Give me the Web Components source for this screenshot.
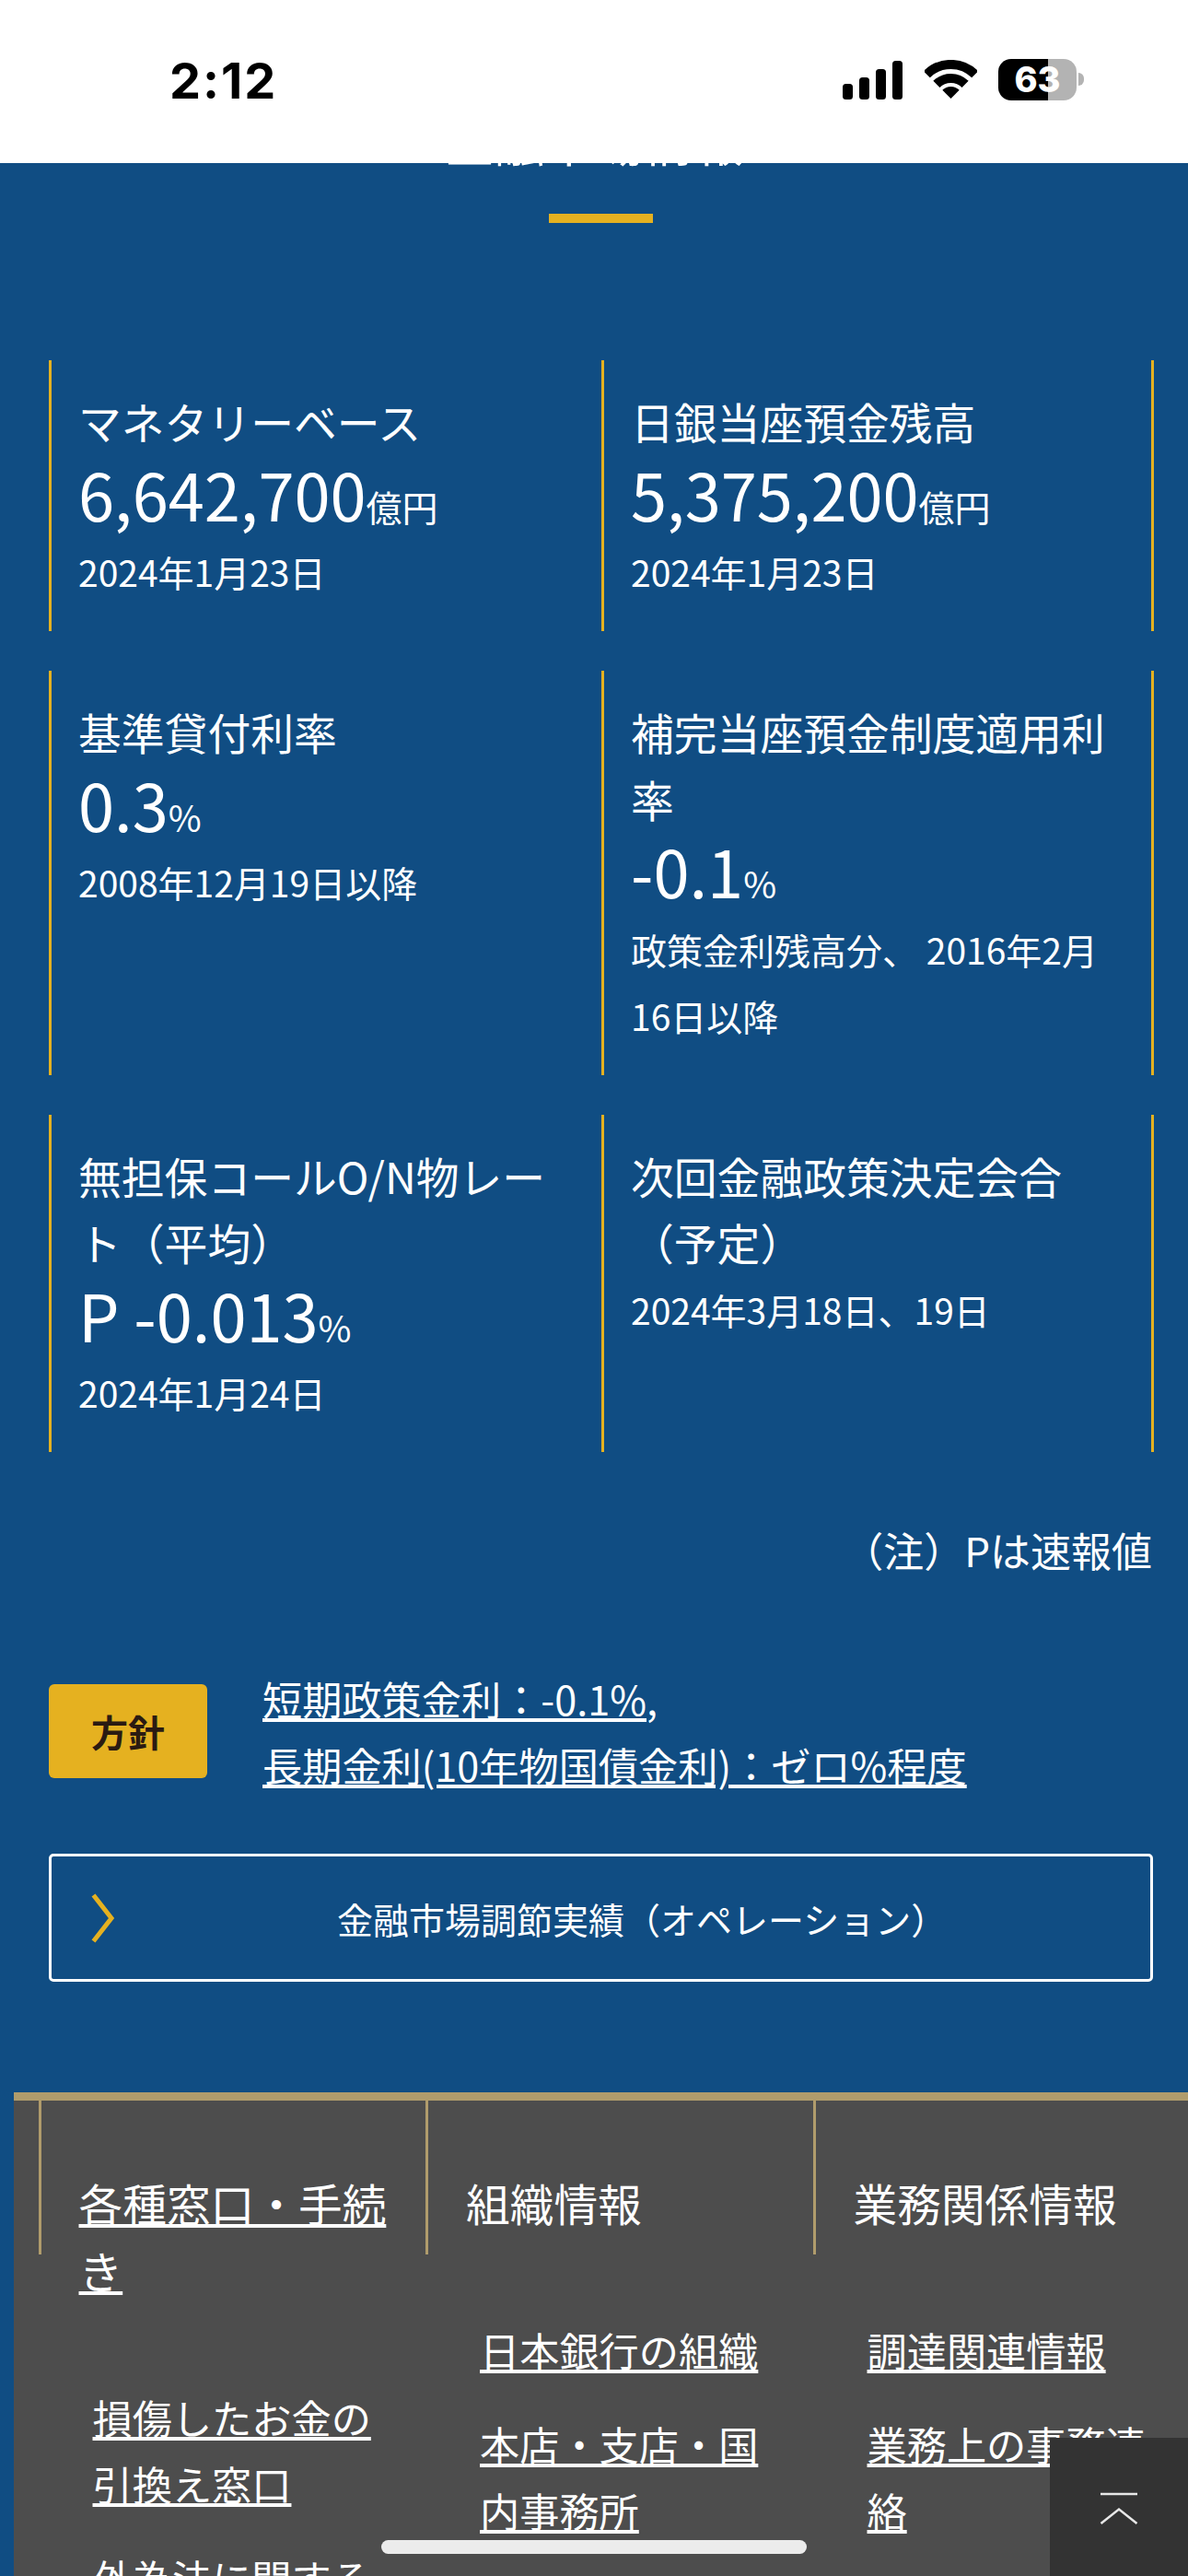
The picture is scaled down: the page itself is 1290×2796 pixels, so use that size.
<!DOCTYPE html>
<html lang="ja">
<head>
<meta charset="utf-8">
<title>金融市場情報</title>
<style>
  html, body { margin: 0; padding: 0; height: 2796px; overflow: hidden; background: #104d83; }
  body { position: relative; font-family: "Noto Sans CJK JP", "Noto Sans", sans-serif; color: #fff; }
  a { color: #fff; }
</style>
</head>
<body>
<boj-market>
  <boj-title>金融市場情報</boj-title>
  <boj-grid>
    <boj-metric>
      <span slot="label">マネタリーベース</span>
      <span slot="value">6,642,700</span><span slot="unit">億円</span>
      <span slot="note">2024年1月23日</span>
    </boj-metric>
    <boj-metric end>
      <span slot="label">日銀当座預金残高</span>
      <span slot="value">5,375,200</span><span slot="unit">億円</span>
      <span slot="note">2024年1月23日</span>
    </boj-metric>
    <boj-metric>
      <span slot="label">基準貸付利率</span>
      <span slot="value">0.3</span><span slot="unit">%</span>
      <span slot="note">2008年12月19日以降</span>
    </boj-metric>
    <boj-metric end>
      <span slot="label">補完当座預金制度適用利率</span>
      <span slot="value">-0.1</span><span slot="unit">%</span>
      <span slot="note">政策金利残高分、 2016年2月<br>16日以降</span>
    </boj-metric>
    <boj-metric>
      <span slot="label">無担保コールO/N物レート（平均）</span>
      <span slot="value">P -0.013</span><span slot="unit">%</span>
      <span slot="note">2024年1月24日</span>
    </boj-metric>
    <boj-metric end noval>
      <span slot="label">次回金融政策決定会合（予定）</span>
      <span slot="note">2024年3月18日、19日</span>
    </boj-metric>
  </boj-grid>
  <boj-note>（注）Pは速報値</boj-note>
  <boj-policy>
    <a href="#">短期政策金利：-0.1%</a>,<br>
    <a href="#">長期金利(10年物国債金利)：ゼロ%程度</a>
  </boj-policy>
  <boj-button>金融市場調節実績（オペレーション）</boj-button>
</boj-market>

<boj-footer>
  <boj-footer-col>
    <a slot="head" href="#">各種窓口・手続き</a>
    <a href="#">損傷したお金の引換え窓口</a>
    <a href="#">外為法に関する手続き</a>
  </boj-footer-col>
  <boj-footer-col>
    <span slot="head">組織情報</span>
    <a href="#">日本銀行の組織</a>
    <a href="#">本店・支店・国内事務所</a>
  </boj-footer-col>
  <boj-footer-col>
    <span slot="head">業務関係情報</span>
    <a href="#">調達関連情報</a>
    <a href="#">業務上の事務連絡</a>
  </boj-footer-col>
</boj-footer>

<boj-status time="2:12" level="63"></boj-status>
<boj-totop></boj-totop>
<boj-home></boj-home>

<script>
// small helper so every element just declares its css + markup
function define(name, html) {
  customElements.define(name, class extends HTMLElement {
    constructor() {
      super();
      this.attachShadow({ mode: 'open' }).innerHTML = typeof html === 'function' ? html(this) : html;
    }
  });
}

define('boj-market', `
  <style>
    :host { display: block; padding: 0 37px 0 53px; }
  </style>
  <slot></slot>
`);

define('boj-title', `
  <style>
    :host { display: block; height: 241px; text-align: center; font-size: 54px; line-height: 76px; }
    div { padding-top: 115px; padding-right: 16px; }
    i { display: block; width: 113px; height: 10px; background: #e5b120; margin: 41px auto 0; transform: translateX(-1px); }
  </style>
  <div><slot></slot></div>
  <i></i>
`);

define('boj-grid', `
  <style>
    :host { display: grid; grid-template-columns: 600px 600px; row-gap: 43px; margin-top: 150px; }
  </style>
  <slot></slot>
`);

define('boj-metric', `
  <style>
    :host { display: block; box-sizing: border-box; border-left: 3px solid #e5b120; padding: 30px 29px 29px; }
    :host([end]) { border-right: 3px solid #e5b120; }
    .label { font-size: 46.8px; line-height: 72.5px; }
    .num { height: 76px; line-height: 76px; padding: 3px 0 11.5px; font-size: 70.4px; white-space: nowrap; }
    :host([noval]) .num { display: none; }
    .unit { font-size: 39px; line-height: 1; }
    .note { font-size: 39px; line-height: 72px; }
  </style>
  <div class="label"><slot name="label"></slot></div>
  <div class="num"><slot name="value"></slot><span class="unit"><slot name="unit"></slot></span></div>
  <div class="note"><slot name="note"></slot></div>
`);

define('boj-note', `
  <style>
    :host { display: block; text-align: right; font-size: 44px; line-height: 73px; margin-top: 70px; padding-right: 2px; }
  </style>
  <slot></slot>
`);

define('boj-policy', `
  <style>
    :host { display: flex; align-items: flex-start; gap: 60px; margin-top: 88px; font-size: 43.2px; line-height: 72px; }
    b { flex: none; width: 172px; height: 102px; margin-top: 21px; background: #e5b120; border-radius: 6px;
        color: #2b1b12; font-size: 40px; line-height: 102px; text-align: center; font-weight: 700; }
  </style>
  <b>方針</b>
  <div><slot></slot></div>
`);

define('boj-button', `
  <style>
    :host { display: flex; align-items: center; box-sizing: border-box; height: 139px; width: 1199px; margin-top: 61px;
      border: 3px solid #fff; border-radius: 5px; font-size: 39px; color: #fff; }
    svg { flex: none; margin-left: 43px; }
    span { flex: 1; padding-left: 239px; }
  </style>
  <svg width="28" height="54" viewBox="0 0 28 54"><path d="M2.5 2 L22 27 L2.5 52" fill="none" stroke="#e5b120" stroke-width="5"/></svg>
  <span><slot></slot></span>
`);

define('boj-footer', `
  <style>
    :host { display: block; margin: 120px 0 0 15px; background: #4d4d4d; border-top: 9px solid #b09c6c; }
    div { display: grid; grid-template-columns: repeat(3, 420.5px); padding-left: 26.5px; }
  </style>
  <div><slot></slot></div>
`);

define('boj-footer-col', `
  <style>
    :host { display: block; position: relative; box-sizing: border-box; padding: 73.5px 30px 0 44px; }
    :host::before { content: ""; position: absolute; left: 0; top: 0; width: 3px; height: 167px; background: #b09c6c; }
    h3 { margin: 0 0 87.5px; font-weight: 400; font-size: 47.7px; line-height: 73px; }
    ::slotted(a) { display: block; color: #fff; margin: 0 0 30px 15px; font-size: 43.2px; line-height: 72px; }
    ::slotted(a[slot="head"]), ::slotted(span[slot="head"]) { display: inline; margin: 0; font-size: 47.7px; line-height: 73px; }
  </style>
  <h3><slot name="head"></slot></h3>
  <slot></slot>
`);

define('boj-status', (el) => `
  <style>
    :host { position: absolute; left: 0; top: 0; width: 1290px; height: 177px; background: #fff; color: #000;
      display: flex; align-items: flex-start; justify-content: space-between; box-sizing: border-box; padding: 0 121px 0 184px; font-family: Inter, sans-serif; }
    .time { font-size: 54px; font-weight: 700; line-height: 39px; margin-top: 68px; letter-spacing: 2px; }
    .icons { display: flex; align-items: flex-start; gap: 23px; margin-top: 64px; }
    .batt { position: relative; width: 85px; height: 45px; border-radius: 14px; overflow: hidden;
      background: linear-gradient(90deg, #000 0 54px, #b3b3b3 54px); color: #fff; font-size: 38px; font-weight: 800; line-height: 45px; text-align: center; }
    .wrap { position: relative; }
    .nub { position: absolute; left: 87px; top: 15px; width: 6px; height: 14px; background: #b3b3b3; border-radius: 0 7px 7px 0; }
  </style>
  <div class="time">${el.getAttribute('time')}</div>
  <div class="icons">
    <svg width="66" height="42" viewBox="0 0 66 42" style="margin-top:2px">
      <rect x="0" y="25" width="11" height="17" rx="3.5"/><rect x="18" y="18" width="11" height="24" rx="3.5"/>
      <rect x="36" y="9" width="11" height="33" rx="3.5"/><rect x="54" y="0" width="11" height="42" rx="3.5"/>
    </svg>
    <svg width="57" height="43" viewBox="0 0 57 43" style="margin-top:1px">
      <path d="M2.3 15.8 A37 37 0 0 1 54.7 15.8" fill="none" stroke="#000" stroke-width="10"/>
      <path d="M12.9 26.4 A22 22 0 0 1 44.1 26.4" fill="none" stroke="#000" stroke-width="10"/>
      <path d="M28.5 42 L19.3 32.8 A13 13 0 0 1 37.7 32.8 Z"/>
    </svg>
    <div class="wrap"><div class="batt">${el.getAttribute('level')}</div><div class="nub"></div></div>
  </div>
`);

define('boj-totop', `
  <style>
    :host { position: absolute; right: 0; top: 2646px; width: 150px; height: 150px; background: #333; }
    svg { display: block; }
  </style>
  <svg width="150" height="150" viewBox="0 0 150 150">
    <path d="M55 61 H95 M55.5 93 L75 77.5 L94.5 93" fill="none" stroke="#e8e8e8" stroke-width="2.5"/>
  </svg>
`);

define('boj-home', `
  <style>
    :host { position: absolute; left: 414px; top: 2757px; width: 462px; height: 15px; border-radius: 8px; background: #ececec; }
  </style>
`);
</script>
</body>
</html>
